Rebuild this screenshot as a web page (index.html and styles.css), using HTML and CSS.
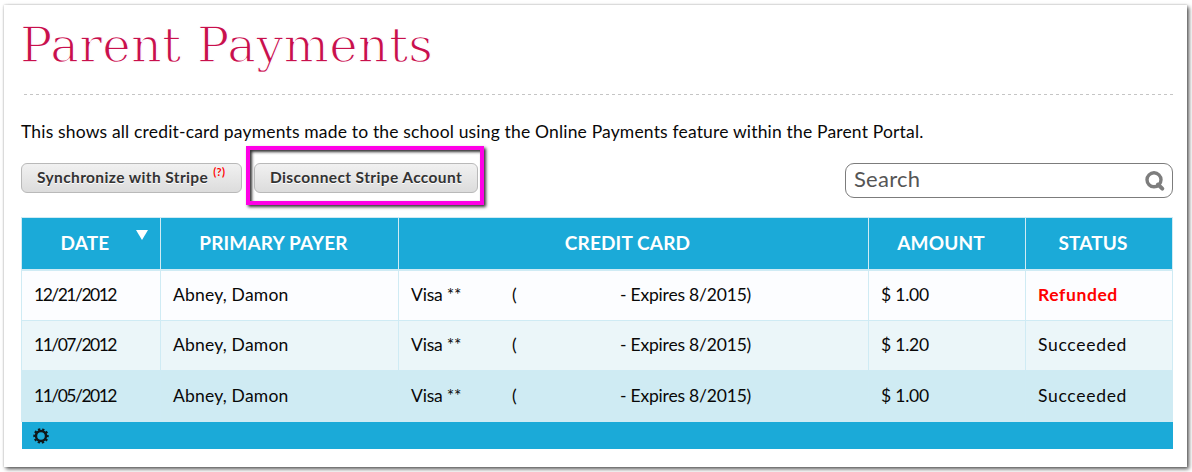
FILE: index.html
```
<!DOCTYPE html>
<html lang="en">
<head>
<meta charset="utf-8">
<title>Parent Payments</title>
<link rel="stylesheet" href="styles.css">
</head>
<body>
<main class="card">
  <h1 class="title">Parent Payments</h1>
  <div class="rule"></div>
  <p class="intro">This shows all credit-card payments made to the school using the Online Payments feature within the Parent Portal.</p>
  <div class="toolbar">
    <button class="btn btn-sync">Synchronize with Stripe<sup class="help">(?)</sup></button>
    <div class="highlight"><button class="btn btn-disconnect">Disconnect Stripe Account</button></div>
    <div class="search">
      <span class="search-text">Search</span>
      <svg class="search-icon" width="22" height="22" viewBox="0 0 22 22" fill="none" stroke="#7d7d7d"><circle cx="10" cy="9.8" r="7" stroke-width="3.4"/><path d="M14 14.5L18.3 18.6" stroke-width="4" stroke-linecap="round"/></svg>
    </div>
  </div>
  <table class="payments">
    <colgroup><col class="c-date"><col class="c-payer"><col class="c-card"><col class="c-amount"><col class="c-status"></colgroup>
    <thead>
      <tr><th class="sorted">DATE<svg class="sort" width="12" height="10" viewBox="0 0 12 10"><path d="M0 0H12L6 10Z" fill="#fff"/></svg></th><th>PRIMARY PAYER</th><th>CREDIT CARD</th><th>AMOUNT</th><th>STATUS</th></tr>
    </thead>
    <tbody>
      <tr class="row-plain"><td class="date">12/21/2012</td><td class="payer">Abney, Damon</td><td class="cc"><span class="brand">Visa **</span><span class="paren">(</span><span class="expires">- Expires 8/2015)</span></td><td class="amount">$ 1.00</td><td class="refunded">Refunded</td></tr>
      <tr class="row-alt"><td class="date">11/07/2012</td><td class="payer">Abney, Damon</td><td class="cc"><span class="brand">Visa **</span><span class="paren">(</span><span class="expires">- Expires 8/2015)</span></td><td class="amount">$ 1.20</td><td class="succeeded">Succeeded</td></tr>
      <tr class="row-hover"><td class="date">11/05/2012</td><td class="payer">Abney, Damon</td><td class="cc"><span class="brand">Visa **</span><span class="paren">(</span><span class="expires">- Expires 8/2015)</span></td><td class="amount">$ 1.00</td><td class="succeeded">Succeeded</td></tr>
    </tbody>
  </table>
  <div class="table-footer">
    <svg width="16" height="16" viewBox="-8 -8 16 16"><circle r="5" fill="none" stroke="#101719" stroke-width="2.4"/><circle r="6.7" fill="none" stroke="#101719" stroke-width="2" stroke-dasharray="2.3 1.909" stroke-dashoffset="1.15"/></svg>
  </div>
</main>
</body>
</html>
```
FILE: styles.css
```
* { box-sizing: border-box; }
body { min-height: 472px; margin: 0; padding: 5px 0 0 4px; background: #fff; font-family: Lato, "Open Sans", sans-serif; font-size: 17.5px; color: #080808; overflow: hidden; }
.card { width: 1183px; height: 462px; padding: 0 14px 0 17px; background: #fff; box-shadow: 0 0 2px rgba(0,0,0,.22), 2px 2px 4px rgba(0,0,0,.65); display: flow-root; }
.title { margin: 9px 0 0 -1px; height: 80px; line-height: 62px; font-family: "DejaVu Serif", serif; font-weight: 400; font-size: 48px; letter-spacing: .2px; color: #c8104c; -webkit-text-stroke: 1.3px #fff; white-space: nowrap; }
.rule { height: 1px; margin-left: 3px; background: repeating-linear-gradient(90deg, #c5c5c5 0 3px, transparent 3px 6px); }
.intro { margin: 24px 0 0; height: 26px; line-height: 26px; letter-spacing: .17px; white-space: nowrap; }
.toolbar { display: flex; height: 60px; margin-top: 2px; align-items: flex-start; }
.btn { height: 30px; margin: 0; padding: 0 0 2px 15px; border: 1px solid #b9b9b9; border-radius: 6px; background: linear-gradient(#f1f1f1, #dcdcdc); color: #333; font: 700 15.5px/26px Lato, sans-serif; letter-spacing: .38px; text-align: left; text-shadow: 0 1px 0 #fff; white-space: nowrap; }
.btn-sync { width: 221px; margin-top: 16px; }
.help { display: inline-block; font-size: 11px; line-height: 10px; color: #f00; font-weight: 700; vertical-align: 7px; margin-left: 5px; text-shadow: none; }
.highlight { width: 238px; height: 59px; margin: -1px 0 0 4px; padding: 13px 0 0 4px; border: 4px solid #ff00e6; box-shadow: 2px 2px 3px #333, inset 2px 2px 3px #333; }
.highlight .btn { display: block; width: 224px; }
.search { display: flex; align-items: center; justify-content: space-between; width: 328px; height: 35px; margin: 16px 0 0 auto; padding: 0 6px 0 8px; border: 1px solid #7c7c7c; border-radius: 9px; color: #555; }
.search-text { padding-bottom: 3px; font-size: 22px; line-height: 30px; letter-spacing: .25px; }
.payments { width: 1152px; margin-top: 10px; table-layout: fixed; border-collapse: separate; border-spacing: 0; }
.c-date { width: 139px; }
.c-payer { width: 238px; }
.c-card { width: 470px; }
.c-amount { width: 157px; }
.c-status { width: 148px; }
.payments th { height: 54px; padding: 0 12px 1px 0; border: 1px solid #cfebf4; border-width: 1px 0 2px 1px; background: #1baad8; color: #fff; font-size: 19px; line-height: 24px; font-weight: 700; letter-spacing: .15px; }
.payments td { height: 50px; padding: 0 0 1px 12px; border: 1px solid #cfebf4; border-width: 0 0 1px 1px; line-height: 22px; white-space: nowrap; }
.payments th:last-child, .payments td:last-child { border-right-width: 1px; }
.sorted { position: relative; }
.sort { position: absolute; left: 114px; top: 12px; }
.row-plain { background: #fcfdff; }
.row-alt { background: #ebf6f9; }
.row-hover { background: #cfebf3; }
.payments .row-hover td { height: 51px; padding-bottom: 0; }
.date { letter-spacing: -1.5px; }
.payer { letter-spacing: .2px; }
.cc, .amount { letter-spacing: -.2px; }
.brand, .paren { display: inline-block; }
.brand { width: 101px; }
.paren { width: 108px; }
.refunded { color: #f00; font-weight: 700; letter-spacing: .6px; }
.succeeded { letter-spacing: .7px; }
.table-footer { display: flex; align-items: center; height: 27px; margin-left: 1px; padding-left: 11px; background: #1baad8; }
```
